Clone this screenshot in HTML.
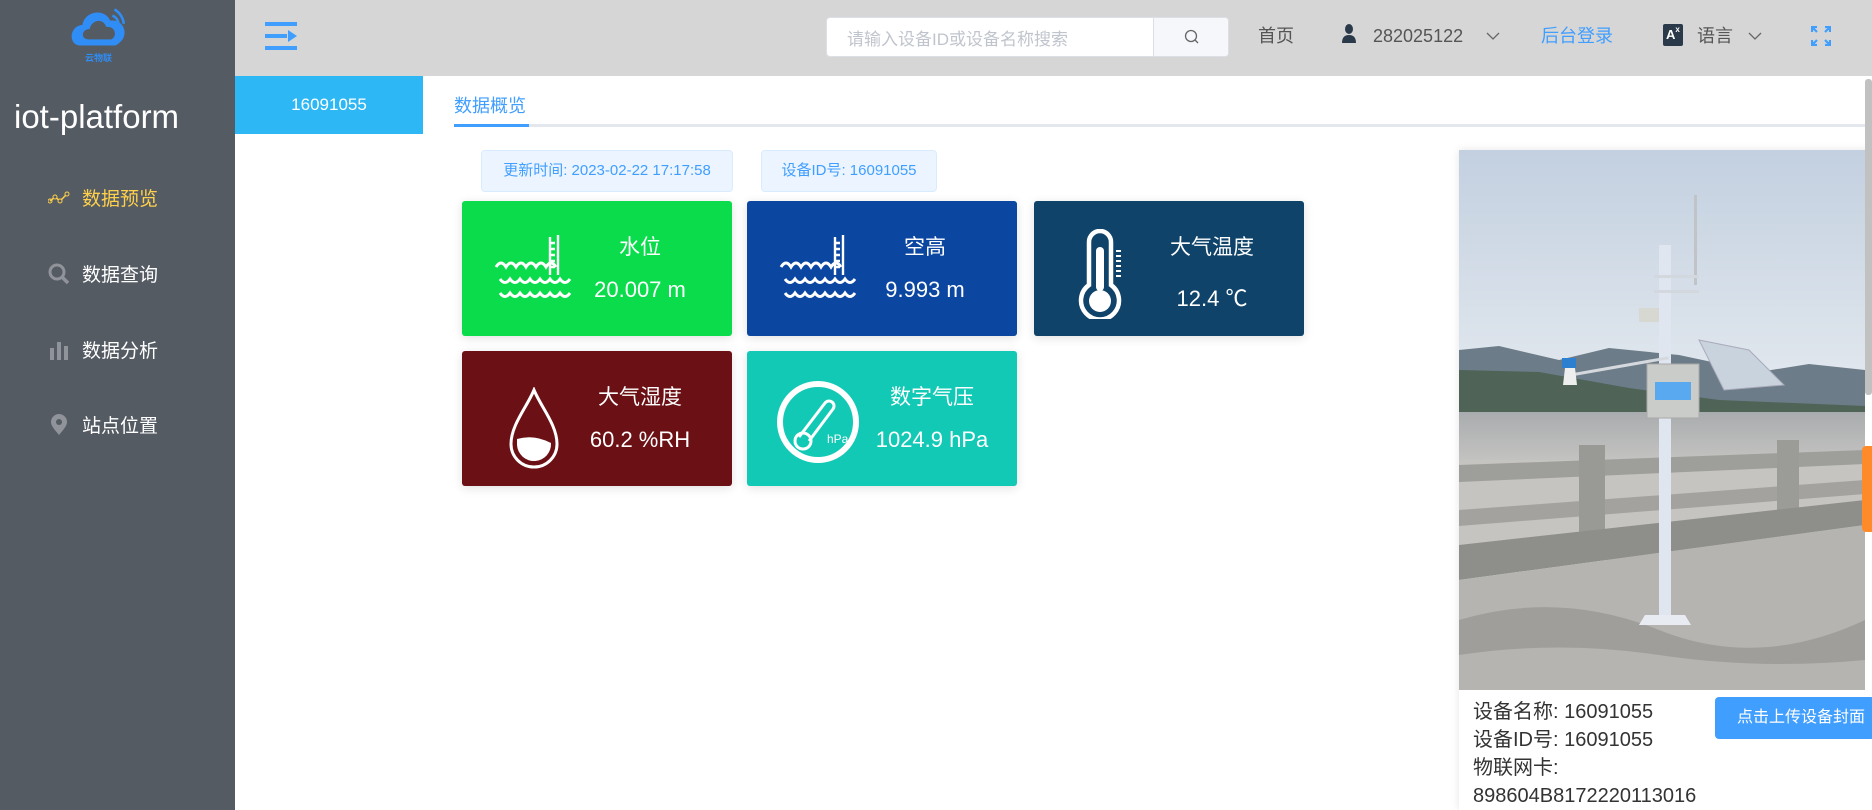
<!DOCTYPE html>
<html><head><meta charset="utf-8">
<style>
*{margin:0;padding:0;box-sizing:border-box}
body{width:1872px;height:810px;overflow:hidden;background:#fff;font-family:"Liberation Sans","Noto Sans CJK SC",sans-serif;position:relative}
.abs{position:absolute}
#side{left:0;top:0;width:235px;height:810px;background:#545b63}
.menu{position:absolute;left:48px;font-size:19px;color:#fff;display:flex;align-items:center}
.menu svg{margin-right:12px}
#hdr{left:235px;top:0;width:1637px;height:76px;background:#d6d6d6}
.ht{position:absolute;top:24px;font-size:18px;color:#555;line-height:24px}
.badge{position:absolute;top:150px;height:42px;background:#ecf5ff;border:1px solid #d9ecff;border-radius:4px;color:#409eff;font-size:15px;line-height:40px;text-align:center}
.card{position:absolute;width:270px;height:135px;border-radius:3px;color:#fff;box-shadow:0 2px 10px rgba(0,0,0,.12)}
.card .t{position:absolute;left:118px;width:120px;text-align:center;top:30px;font-size:21px}
.card .v{position:absolute;left:98px;width:160px;text-align:center;top:76px;font-size:22px}
.card svg{position:absolute}
.info{position:absolute;left:1473px;font-size:20px;color:#333;line-height:28px}
</style></head><body>
<div id="side" class="abs">
  <svg class="abs" style="left:70px;top:6px" width="60" height="46" viewBox="0 0 58 44">
    <path d="M10 38 C-2 38 -1 19 12 18 C14 5 33 1 39 14 C52 12 58 28 47 36 L44 38 Z" fill="#2f8df5"/>
    <path d="M18 32 C10 32 11 22 19 22 C21 13 32 11 35 20 C44 19 46 29 40 32 Z" fill="#545b63"/>
    <path d="M43 3 Q51 8 52 17" stroke="#2f8df5" stroke-width="2.5" fill="none"/>
    <path d="M41 9 Q46 11 47 17" stroke="#2f8df5" stroke-width="2.5" fill="none"/>
  </svg>
  <div class="abs" style="left:85px;top:51px;font-size:9px;color:#2f8df5;font-weight:bold">云物联</div>
  <div class="abs" style="left:14px;top:98px;font-size:33px;color:#fff">iot-platform</div>
  <div class="menu" style="top:184px;color:#ffd04b"><svg width="22" height="14" viewBox="0 0 22 14"><polyline points="2,10 7,6 12,10 19,3" fill="none" stroke="#ffd04b" stroke-width="1.5"/><circle cx="2" cy="10" r="2" fill="none" stroke="#ffd04b"/><circle cx="7" cy="6" r="2" fill="#545b63" stroke="#ffd04b"/><circle cx="12" cy="10" r="2" fill="#545b63" stroke="#ffd04b"/><circle cx="19" cy="3" r="2" fill="#545b63" stroke="#ffd04b"/></svg>数据预览</div>
  <div class="menu" style="top:260px"><svg width="22" height="22" viewBox="0 0 22 22"><circle cx="9" cy="9" r="7" fill="none" stroke="#909399" stroke-width="3"/><line x1="14" y1="14" x2="20" y2="20" stroke="#909399" stroke-width="3.5"/></svg>数据查询</div>
  <div class="menu" style="top:336px"><svg width="22" height="20" viewBox="0 0 22 20"><rect x="2" y="8" width="4" height="12" fill="#909399"/><rect x="9" y="2" width="4" height="18" fill="#909399"/><rect x="16" y="6" width="4" height="14" fill="#909399"/></svg>数据分析</div>
  <div class="menu" style="top:411px"><svg width="22" height="22" viewBox="0 0 22 22"><path d="M11 21 C5 14 3 11 3 8 A8 8 0 0 1 19 8 C19 11 17 14 11 21Z" fill="#909399"/><circle cx="11" cy="8" r="3" fill="#545b63"/></svg>站点位置</div>
</div>
<div id="hdr" class="abs">
  <svg class="abs" style="left:30px;top:21px" width="32" height="30" viewBox="0 0 32 30"><rect x="0" y="1" width="32" height="4" fill="#409eff"/><rect x="0" y="13" width="22" height="4" fill="#409eff"/><rect x="0" y="25" width="32" height="4" fill="#409eff"/><polygon points="23,9 32,15 23,21" fill="#409eff"/></svg>
  <div class="abs" style="left:591px;top:17px;width:403px;height:40px;background:#fff;border:1px solid #dcdfe6;border-radius:4px;overflow:hidden">
    <div class="abs" style="left:20px;top:7px;font-size:17px;color:#c0c4cc">请输入设备ID或设备名称搜索</div>
    <div class="abs" style="left:326px;top:0;width:77px;height:40px;background:#f5f7fa;border-left:1px solid #dcdfe6"><svg class="abs" style="left:30px;top:11px" width="16" height="16" viewBox="0 0 16 16"><circle cx="7" cy="7" r="5.5" fill="none" stroke="#666" stroke-width="1.3"/><line x1="11" y1="11" x2="14" y2="14" stroke="#666" stroke-width="1.3"/></svg></div>
  </div>
  <div class="ht" style="left:1023px">首页</div>
  <svg class="abs" style="left:1106px;top:24px" width="16" height="20" viewBox="0 0 16 20"><ellipse cx="8" cy="5" rx="4" ry="5" fill="#2b3a4a"/><path d="M1 19 Q1 11 8 11 Q15 11 15 19Z" fill="#2b3a4a"/></svg>
  <div class="ht" style="left:1138px">282025122</div>
  <svg class="abs" style="left:1251px;top:32px" width="14" height="9" viewBox="0 0 14 9"><polyline points="1,1 7,7 13,1" fill="none" stroke="#666" stroke-width="1.3"/></svg>
  <div class="ht" style="left:1306px;color:#409eff">后台登录</div>
  <div class="abs" style="left:1428px;top:24px;width:20px;height:22px;background:#2b3a4a;border-radius:2px;color:#fff;font-size:13px;font-weight:bold;line-height:22px;padding-left:3px">A<span style="font-size:8px;vertical-align:top;line-height:12px">x</span></div>
  <div class="ht" style="left:1462px">语言</div>
  <svg class="abs" style="left:1513px;top:32px" width="14" height="9" viewBox="0 0 14 9"><polyline points="1,1 7,7 13,1" fill="none" stroke="#666" stroke-width="1.3"/></svg>
  <svg class="abs" style="left:1576px;top:26px" width="20" height="20" viewBox="0 0 20 20" fill="none" stroke="#409eff" stroke-width="2.2"><path d="M1 6V1h5M1 1l5 5M19 6V1h-5M19 1l-5 5M1 14v5h5M1 19l5-5M19 14v5h-5M19 19l-5-5"/></svg>
</div>
<div class="abs" style="left:235px;top:76px;width:188px;height:58px;background:#2db7f5;color:#fff;font-size:17px;text-align:center;line-height:58px">16091055</div>
<div class="abs" style="left:454px;top:124px;width:1411px;height:3px;background:#e4e7ed"></div>
<div class="abs" style="left:454px;top:92px;font-size:18px;color:#409eff">数据概览</div>
<div class="abs" style="left:454px;top:124px;width:75px;height:3px;background:#409eff"></div>

<div class="badge" style="left:481px;width:252px">更新时间: 2023-02-22 17:17:58</div>
<div class="badge" style="left:761px;width:176px">设备ID号: 16091055</div>

<svg width="0" height="0" style="position:absolute"><defs>
<g id="water" fill="none" stroke="#fff" stroke-width="3">
<path d="M2 32 q5 -8 10 0 q5 -8 10 0 q5 -8 10 0 q5 -8 10 0 q5 -8 10 0 q5 -8 10 0"/>
<path d="M6 44 q5 7 10 0 q5 7 10 0 q5 7 10 0 q5 7 10 0 q5 7 10 0 q5 7 10 0 q5 7 10 0"/>
<path d="M6 58 q5 7 10 0 q5 7 10 0 q5 7 10 0 q5 7 10 0 q5 7 10 0 q5 7 10 0 q5 7 10 0"/>
<path d="M56 2v38M64 0v40M56 8h5M56 14h5M56 20h5M56 26h5M56 32h5" stroke-width="2.4"/>
</g></defs></svg>

<div class="card" style="left:462px;top:201px;background:#0adc4c">
  <svg style="left:32px;top:34px" width="82" height="70" viewBox="0 0 82 70"><use href="#water"/></svg>
  <div class="t">水位</div><div class="v">20.007 m</div></div>
<div class="card" style="left:747px;top:201px;background:#0b46a0">
  <svg style="left:32px;top:34px" width="82" height="70" viewBox="0 0 82 70"><use href="#water"/></svg>
  <div class="t">空高</div><div class="v">9.993 m</div></div>
<div class="card" style="left:1034px;top:201px;background:#0f4369">
  <svg style="left:44px;top:28px" width="48" height="90" viewBox="0 0 48 90"><path d="M11 56V13a11 11 0 0 1 22 0v43a19 19 0 1 1 -22 0z" fill="none" stroke="#fff" stroke-width="4.5"/><rect x="18" y="18" width="8" height="44" rx="4" fill="#fff"/><circle cx="22" cy="72" r="11" fill="#fff"/><g stroke="#fff" stroke-width="2"><path d="M38 22h5M38 27h5M38 32h5M38 37h5M38 42h5M38 47h5"/></g></svg>
  <div class="t">大气温度</div><div class="v" style="top:80px">12.4 ℃</div></div>
<div class="card" style="left:462px;top:351px;background:#6b1116">
  <svg style="left:45px;top:36px" width="54" height="84" viewBox="0 0 54 84"><path d="M27 3 C20 20 4 38 4 57 a23 23 0 0 0 46 0 C50 38 34 20 27 3Z" fill="none" stroke="#fff" stroke-width="3"/><path d="M10 52 Q27 47 44 56 a17 17 0 0 1 -34 2Z" fill="#fff"/></svg>
  <div class="t">大气湿度</div><div class="v">60.2 %RH</div></div>
<div class="card" style="left:747px;top:351px;background:#12c9b5">
  <svg style="left:28px;top:28px" width="86" height="86" viewBox="0 0 86 86"><circle cx="43" cy="43" r="38" fill="none" stroke="#fff" stroke-width="6"/><path d="M24 58 L50 24 a5 5 0 0 1 8 6 L34 62" fill="none" stroke="#fff" stroke-width="3"/><circle cx="28" cy="62" r="8" fill="none" stroke="#fff" stroke-width="3"/><text x="52" y="64" font-size="12" fill="#fff" font-family="Liberation Sans">hPa</text></svg>
  <div class="t" style="left:125px">数字气压</div><div class="v" style="left:105px">1024.9 hPa</div></div>

<div class="abs" style="left:1459px;top:150px;width:413px;height:660px;background:#fff;box-shadow:0 0 8px rgba(0,0,0,.1)">
<svg class="abs" style="left:0;top:0" width="406" height="540" viewBox="0 0 406 540">
<defs><linearGradient id="sky" x1="0" y1="0" x2="0" y2="1"><stop offset="0" stop-color="#c3d0e0"/><stop offset=".5" stop-color="#e6ebf0"/><stop offset="1" stop-color="#eef0f2"/></linearGradient>
<linearGradient id="sea" x1="0" y1="0" x2="0" y2="1"><stop offset="0" stop-color="#a9acae"/><stop offset="1" stop-color="#c9c8c5"/></linearGradient></defs>
<rect width="406" height="540" fill="url(#sky)"/>
<path d="M0 200 L40 196 L100 210 L150 198 L220 205 L300 222 L350 214 L406 220 L406 265 L0 265Z" fill="#6c7c88"/>
<path d="M0 220 L80 222 L170 238 L260 250 L406 256 L406 268 L0 268Z" fill="#4f6357"/>
<rect y="262" width="406" height="60" fill="url(#sea)"/>
<rect y="310" width="406" height="100" fill="#c6c4c0"/>
<path d="M0 315 L406 300 L406 314 L0 332Z" fill="#9e9e9b"/>
<path d="M0 360 L406 330 L406 344 L0 376Z" fill="#a3a29f"/>
<rect x="120" y="295" width="26" height="95" fill="#999996"/>
<rect x="318" y="290" width="22" height="70" fill="#9b9b98"/>
<path d="M0 395 L406 350 L406 375 L0 430Z" fill="#8e8e8b"/>
<path d="M0 430 L406 375 L406 540 L0 540Z" fill="#b5b4b0"/>
<path d="M0 470 Q100 440 200 480 T406 470 L406 510 Q300 520 200 505 T0 505Z" fill="#8e8d88" opacity=".55"/>
<rect x="200" y="95" width="12" height="380" fill="#dfe6ef"/>
<rect x="235" y="45" width="3" height="90" fill="#c1c4c6"/>
<rect x="195" y="125" width="45" height="3" fill="#d3d8de"/>
<rect x="195" y="140" width="45" height="3" fill="#d3d8de"/>
<rect x="180" y="158" width="20" height="14" fill="#d8d8d2"/>
<rect x="110" y="215" width="100" height="3" fill="#d5d9de" transform="rotate(-10 160 215)"/>
<rect x="103" y="208" width="14" height="10" fill="#2d7fd0"/>
<path d="M106 218 L116 218 L118 235 L104 235Z" fill="#eee"/>
<path d="M240 190 L290 200 L325 235 L265 240Z" fill="#c9d3dd" stroke="#aab"/>
<rect x="188" y="214" width="52" height="54" fill="#c9ccc8" stroke="#aaa"/>
<rect x="196" y="232" width="36" height="18" fill="#58a9ef"/>
<path d="M186 465 L226 465 L232 475 L180 475Z" fill="#e8ecf2"/>
</svg>
<div class="info" style="left:14px;top:548px">设备名称: 16091055<br>设备ID号: 16091055<br>物联网卡:<br>898604B8172220113016</div>
<div class="abs" style="left:256px;top:547px;width:160px;height:42px;background:#409eff;border-radius:4px;color:#fff;font-size:16px;line-height:42px;padding-left:22px">点击上传设备封面</div>
</div>
<div class="abs" style="left:1865px;top:79px;width:7px;height:316px;background:#c1c1c1;border-radius:3px"></div>
<div class="abs" style="left:1862px;top:446px;width:10px;height:86px;background:#ff8a2a;border-radius:4px 0 0 4px"></div>
</body></html>
